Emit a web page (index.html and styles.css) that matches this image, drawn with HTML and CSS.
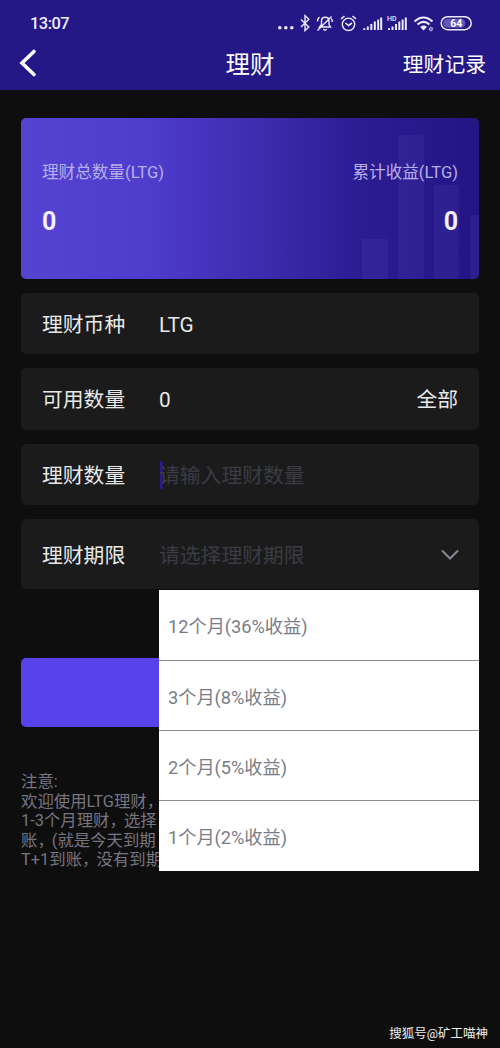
FILE: index.html
```html
<!DOCTYPE html>
<html lang="zh-CN">
<head>
<meta charset="utf-8">
<title>理财</title>
<link rel="stylesheet" href="styles.css">
</head>
<body>
<header class="header">
  <div class="status">
    <span class="clock">13:07</span>
    <svg class="status-icons" viewBox="0 0 200 24" fill="none" stroke="#eeeaff" stroke-width="1.4">
      <g fill="#eeeaff" stroke="none"><circle cx="9.800" cy="16.800" r="1.800"/><circle cx="15.800" cy="16.800" r="1.800"/><circle cx="21.800" cy="16.800" r="1.800"/></g>
      <path d="M31 8.500l7.800 7.500-3.800 3.700V4.600l3.800 3.700-7.800 7.700" stroke-width="1.400"/>
      <path d="M49.500 16h11l-1.500-2.500V10c0-5-7.500-5-7.500 0v3.500zM53.500 18c.5 1.500 2.500 1.500 3 0M47.500 19.500L61.500 5.500M47.500 10.500c0-2 .7-3.500 2-4.500M62.300 11c0-1.500-.2-2.500-1-3.500" stroke-width="1.400"/>
      <circle cx="78.500" cy="13.300" r="6.200"/><path d="M75.500 12l3 2.500 3.500-2.500M71 7.800l3.500-2.800M86 7.800l-3.500-2.800" stroke-width="1.600"/>
      <path d="M94.300 19v-1.800M97.800 19v-3.500M101.300 19v-6M104.800 19v-8.500M108.200 19v-10.500M111.200 19v-12.500" stroke-width="2"/>
      <path d="M119 19v-1.800M122.500 19v-3.500M126 19v-6M129.300 19v-8.500M132.600 19v-10.500M135.800 19v-12.500" stroke-width="2"/>
      <text class="hd" x="117" y="9.500">HD</text>
      <path d="M144.500 10.500c5.500-5.500 12.500-5.500 18 0M147.500 13.600c4-3.600 8-3.600 12 0" stroke-width="2"/><path d="M150.200 16c2-1.900 4.700-1.900 6.700 0l-3.400 3.500z" fill="#eeeaff" stroke="none"/>
      <path d="M159.300 18h3.500c0-2.300-3.500-2.300-3.500 0 0 2 2.500 2.200 3.400 1" stroke-width=".8"/>
      <rect x="171.200" y="5.700" width="30" height="13" rx="6.500" stroke-width="1.500"/>
      <rect x="173.200" y="7.700" width="22" height="9" rx="4.500" fill="#6557b8" stroke="none"/>
      <text class="battery" x="186.300" y="16">64</text>
    </svg>
  </div>
  <nav class="nav">
    <svg class="back" viewBox="0 0 18 30"><path d="M15 3.500L3 15l12 11.500" fill="none" stroke="#fff" stroke-width="3.600" stroke-linecap="round"/></svg>
    <h1 class="title">理财</h1>
    <span class="records">理财记录</span>
  </nav>
</header>
<main class="main">
  <section class="summary">
    <svg class="bars" viewBox="0 0 120 148" fill="#6a5ac8"><path d="M3 108h26v40H3zM39 4h26v144H39zM75 54h25v94H75zM111 84h9v64h-9z" fill-opacity=".13"/></svg>
    <div class="stat"><span class="stat-label">理财总数量(LTG)</span><b class="stat-value">0</b></div>
    <div class="stat stat-right"><span class="stat-label">累计收益(LTG)</span><b class="stat-value">0</b></div>
  </section>
  <div class="field"><span class="label">理财币种</span><span class="value">LTG</span></div>
  <div class="field"><span class="label">可用数量</span><span class="value">0</span><span>全部</span></div>
  <div class="field"><span class="label">理财数量</span><span class="value placeholder focused">请输入理财数量</span></div>
  <div class="field field-select">
    <span class="label">理财期限</span><span class="value placeholder">请选择理财期限</span>
    <svg class="chevron" viewBox="0 0 20 12"><path d="M2.500 2l7.500 7.500L17.500 2" fill="none" stroke="#858993" stroke-width="2" stroke-linecap="round"/></svg>
    <ul class="menu">
      <li class="option">12个月(36%收益)</li>
      <li class="option">3个月(8%收益)</li>
      <li class="option">2个月(5%收益)</li>
      <li class="option">1个月(2%收益)</li>
    </ul>
  </div>
  <div class="submit"></div>
  <div class="notes">
    <p>注意:</p>
    <p>欢迎使用LTG理财<span class="comma">，</span></p>
    <p>1-3个月理财<span class="comma">，</span>选择</p>
    <p>账<span class="comma">，</span>(就是今天到期</p>
    <p>T+1到账<span class="comma">，</span>没有到期</p>
  </div>
</main>
<footer class="credit">搜狐号@矿工喵神</footer>
</body>
</html>
```
FILE: styles.css
```css
* { box-sizing: border-box; }
body {
  margin: 0;
  height: 1048px;
  display: flex;
  flex-direction: column;
  background: #0e0e0e;
  color: #e8e8e8;
  font-family: Roboto, "Noto Sans CJK SC", sans-serif;
  overflow: hidden;
}
.header { height: 90px; background: #241786; color: #fff; }
.status { height: 36px; padding: 11px 30px 0 30px; display: flex; justify-content: space-between; }
.clock { font-size: 16.4px; line-height: 25px; font-weight: 500; letter-spacing: -0.5px; color: #f0edff; }
.status-icons { width: 200px; height: 24px; overflow: visible; }
.hd { font-size: 7px; font-weight: 500; fill: #eeeaff; stroke: none; }
.battery { font-size: 10.5px; font-weight: 700; fill: #fff; stroke: none; text-anchor: middle; }
.nav { height: 54px; padding: 0 14px 0 19px; display: grid; grid-template-columns: 1fr 49px 1fr; align-items: center; }
.back { width: 18px; height: 30px; }
.title { margin: 0 0 0 -2.5px; padding-top: 3px; font-size: 24.4px; line-height: 36px; font-weight: 400; white-space: nowrap; }
.records { padding-top: 3px; font-size: 20.8px; line-height: 30px; justify-self: end; }
.main { padding: 28px 21px 0; flex: 1; }
.summary {
  position: relative;
  height: 160.5px;
  margin-bottom: 14px;
  padding: 43px 21px 0;
  display: flex;
  justify-content: space-between;
  border-radius: 5px;
  background: linear-gradient(90deg, #5543d2 0%, #4e3ccd 28%, #3d2cad 52%, #2b1c92 75%, #231585 100%);
  overflow: hidden;
}
.bars { position: absolute; right: 0; bottom: 0; width: 120px; height: 148px; }
.stat { position: relative; display: flex; flex-direction: column; }
.stat-right { align-items: flex-end; }
.stat-label { font-size: 16.6px; line-height: 24px; color: #b7afe9; }
.stat-value { margin-top: 22px; font-size: 25px; line-height: 30px; color: #f3f0ff; }
.field {
  height: 61.6px;
  margin-bottom: 14px;
  padding: 3px 21px 0;
  display: flex;
  align-items: center;
  border-radius: 5px;
  background: #1b1b1b;
  font-size: 20.8px;
  line-height: 30px;
}
.label { width: 117px; }
.value { flex: 1; }
.placeholder { color: #3a3b44; }
.focused { background: linear-gradient(#2a1899, #2a1899) 1px 0 / 2.5px 28px no-repeat; }
.field-select { position: relative; height: 70px; }
.chevron { width: 20px; height: 12px; margin: -2px -2px 0 0; }
.menu {
  position: absolute;
  left: 138px;
  top: 71px;
  width: 320px;
  margin: 0;
  padding: 0;
  list-style: none;
  background: #fff;
}
.option { height: 70.3px; padding: 1px 0 0 9px; border-bottom: 1px solid #8e8e92; color: #7a7d87; font-size: 18.2px; line-height: 71px; }
.option:last-child { border-bottom: 0; }
.submit { height: 69px; margin-top: 69px; border-radius: 5px; background: #5842e9; }
.notes { margin-top: 45px; width: 138px; white-space: nowrap; color: #777582; font-size: 16.4px; line-height: 19.5px; }
.notes p { margin: 0; }
.comma { letter-spacing: -2px; }
.credit { padding: 0 12px 2px; text-align: right; color: #eee; font-size: 12.5px; line-height: 24px; }
```
